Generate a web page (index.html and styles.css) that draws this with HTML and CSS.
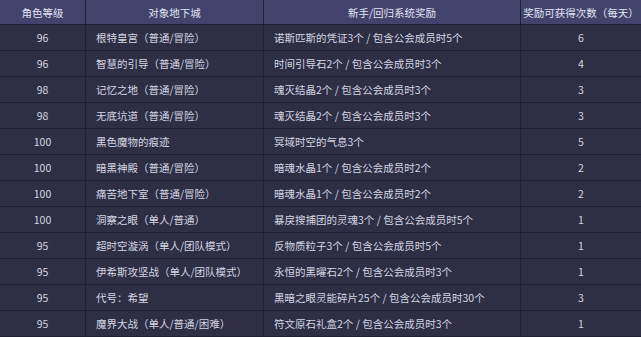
FILE: index.html
```html
<!DOCTYPE html>
<html lang="zh">
<head>
<meta charset="utf-8">
<link rel="stylesheet" href="styles.css">
</head>
<body>
<table class="reward-table">
  <colgroup>
    <col class="c-level">
    <col class="c-dungeon">
    <col class="c-reward">
    <col class="c-count">
  </colgroup>
  <thead>
    <tr>
      <th>角色等级</th>
      <th>对象地下城</th>
      <th>新手/回归系统奖励</th>
      <th>奖励可获得次数（每天）</th>
    </tr>
  </thead>
  <tbody>
    <tr><td class="center">96</td><td>根特皇宫（普通/冒险）</td><td>诺斯匹斯的凭证3个 / 包含公会成员时5个</td><td class="center">6</td></tr>
    <tr><td class="center">96</td><td>智慧的引导（普通/冒险）</td><td>时间引导石2个 / 包含公会成员时3个</td><td class="center">4</td></tr>
    <tr><td class="center">98</td><td>记忆之地（普通/冒险）</td><td>魂灭结晶2个 / 包含公会成员时3个</td><td class="center">3</td></tr>
    <tr><td class="center">98</td><td>无底坑道（普通/冒险）</td><td>魂灭结晶2个 / 包含公会成员时3个</td><td class="center">3</td></tr>
    <tr><td class="center">100</td><td>黑色魔物的痕迹</td><td>冥域时空的气息3个</td><td class="center">5</td></tr>
    <tr><td class="center">100</td><td>暗黑神殿（普通/冒险）</td><td>暗魂水晶1个 / 包含公会成员时2个</td><td class="center">2</td></tr>
    <tr><td class="center">100</td><td>痛苦地下室（普通/冒险）</td><td>暗魂水晶1个 / 包含公会成员时2个</td><td class="center">2</td></tr>
    <tr><td class="center">100</td><td>洞察之眼（单人/普通）</td><td>暴戾搜捕团的灵魂3个 / 包含公会成员时5个</td><td class="center">1</td></tr>
    <tr><td class="center">95</td><td>超时空漩涡（单人/团队模式）</td><td>反物质粒子3个 / 包含公会成员时5个</td><td class="center">1</td></tr>
    <tr><td class="center">95</td><td>伊希斯攻坚战（单人/团队模式）</td><td>永恒的黑曜石2个 / 包含公会成员时3个</td><td class="center">1</td></tr>
    <tr><td class="center">95</td><td>代号：希望</td><td>黑暗之眼灵能碎片25个 / 包含公会成员时30个</td><td class="center">3</td></tr>
    <tr><td class="center">95</td><td>魔界大战（单人/普通/困难）</td><td>符文原石礼盒2个 / 包含公会成员时3个</td><td class="center">1</td></tr>
  </tbody>
</table>
</body>
</html>
```
FILE: styles.css
```css
html, body {
  margin: 0;
  padding: 0;
  background: #2d2e44;
}
.reward-table {
  width: 642px;
  border-collapse: collapse;
  table-layout: fixed;
  font-family: "Microsoft YaHei", "Noto Sans CJK SC", sans-serif;
  font-size: 10.5px;
  color: #d4d5e2;
  margin-left: -1px;
}
.c-level { width: 86px; }
.c-dungeon { width: 178px; }
.c-reward { width: 257px; }
.c-count { width: 121px; }
.reward-table th,
.reward-table td {
  border: 1px solid #1f2031;
  white-space: nowrap;
  overflow: hidden;
  padding: 0 0 0 10px;
  text-align: left;
}
.reward-table th {
  background: #41436d;
  color: #e2e3f2;
  font-weight: normal;
  height: 24px;
  text-align: center;
  padding: 0;
  border-top: none;
}
.reward-table td {
  background: #2e2f45;
  height: 25px;
}
.reward-table td.center {
  text-align: center;
  padding: 0;
}
```
